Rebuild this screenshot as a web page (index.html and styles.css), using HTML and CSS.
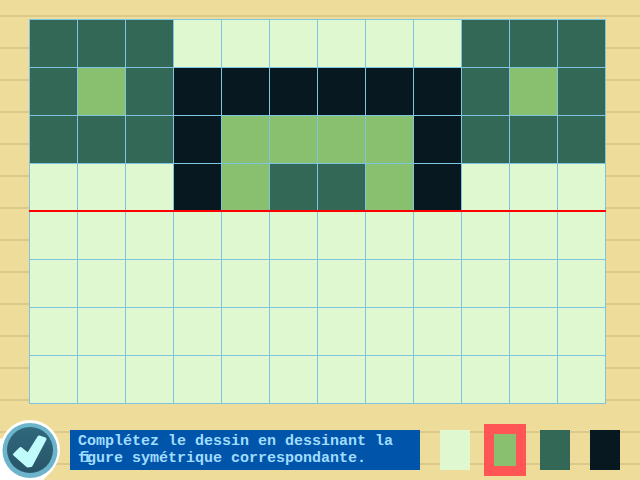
FILE: index.html
```html
<!DOCTYPE html>
<html>
<head>
    <title>Dessin symétrique</title>
    <link rel="stylesheet" href="styles.css">
</head>
<body>
    <div id="board">
        <div id="grid"></div>
        <div id="axis"></div>
    </div>

    <div id="footer">
        <button id="validate">
            <svg viewBox="0 0 60 60" width="60" height="60">
                <defs>
                    <linearGradient id="disc" x1="0" y1="0" x2="0" y2="1">
                        <stop offset="0" stop-color="#30687c"/>
                        <stop offset="1" stop-color="#285468"/>
                    </linearGradient>
                </defs>
                <path d="M0 18 L0 60 L43 60 L53 50 Z" fill="#ffffff"/>
                <circle cx="30" cy="30" r="30" fill="#ffffff"/>
                <circle cx="30" cy="30.5" r="27.5" fill="#6cb4cc"/>
                <circle cx="30" cy="30" r="23" fill="url(#disc)"/>
                <path d="M14.5 34.5 L20.5 28.5 L28 34.5 L39 17 L45 19 L31 45.5 L27.5 46 Z" fill="#c0fcfc" stroke="#c0fcfc" stroke-width="3" stroke-linejoin="round"/>
            </svg>
        </button>
        <div id="instructions">Complétez le dessin en dessinant la <span class="fi">fi</span>gure symétrique correspondante.</div>
        <div id="palette">
            <div class="swatch c0"></div>
            <div class="swatch c1 selected"></div>
            <div class="swatch c2"></div>
            <div class="swatch c3"></div>
        </div>
    </div>

    <script>
        // top half of the figure, one digit per cell, bottom half is left empty
        const rows = [
            '222000000222',
            '212333333212',
            '222311113222',
            '000312213000',
            '000000000000',
            '000000000000',
            '000000000000',
            '000000000000'
        ];

        const grid = document.getElementById('grid');
        rows.forEach(row => {
            row.split('').forEach(value => {
                const cell = document.createElement('div');
                cell.className = 'cell c' + value;
                grid.appendChild(cell);
            });
        });
    </script>
</body>
</html>
```

FILE: styles.css
```css
html, body {
    margin: 0;
    height: 100%;
}
body {
    width: 640px;
    height: 480px;
    overflow: hidden;
    background-color: #eedc9a;
    background-image: repeating-linear-gradient(to bottom, #eedc9a 0, #eedc9a 15px, #dac98a 15px, #dac98a 17px, #eedc9a 17px, #eedc9a 32px);
    font-family: "Liberation Mono", monospace;
}
#board {
    position: relative;
    width: 577px;
    margin-left: 29px;
    padding-top: 19px;
}
#grid {
    display: grid;
    grid-template-columns: repeat(12, 47px);
    grid-auto-rows: 47px;
    gap: 1px;
    padding: 1px;
    background-color: #7fc4e0;
}
#axis {
    position: absolute;
    left: 0;
    right: 0;
    top: 210px;
    height: 2px;
    background-color: #ff0000;
}
.c0 {
    background-color: #e0f8d0;
}
.c1 {
    background-color: #88c070;
}
.c2 {
    background-color: #346856;
}
.c3 {
    background-color: #081820;
}
#footer {
    display: flex;
    align-items: center;
    height: 60px;
    margin-top: 16px;
}
#validate {
    width: 60px;
    height: 60px;
    padding: 0;
    border: none;
    background: none;
    flex: none;
}
#validate svg {
    display: block;
}
#instructions {
    box-sizing: border-box;
    width: 350px;
    height: 40px;
    margin-left: 10px;
    padding: 3px 8px 0;
    background-color: #0055aa;
    color: #a0dcff;
    font-size: 15px;
    font-weight: bold;
    line-height: 17px;
}
/* the reference sets "fi" as one ligature cell */
.fi {
    letter-spacing: -4.5px;
}
#palette {
    display: flex;
    align-items: center;
    gap: 20px;
    margin-left: 20px;
}
.swatch {
    box-sizing: border-box;
    width: 30px;
    height: 40px;
}
.swatch.selected {
    width: 42px;
    height: 52px;
    margin: 0 -6px;
    border: 10px solid #ff5555;
}
```
